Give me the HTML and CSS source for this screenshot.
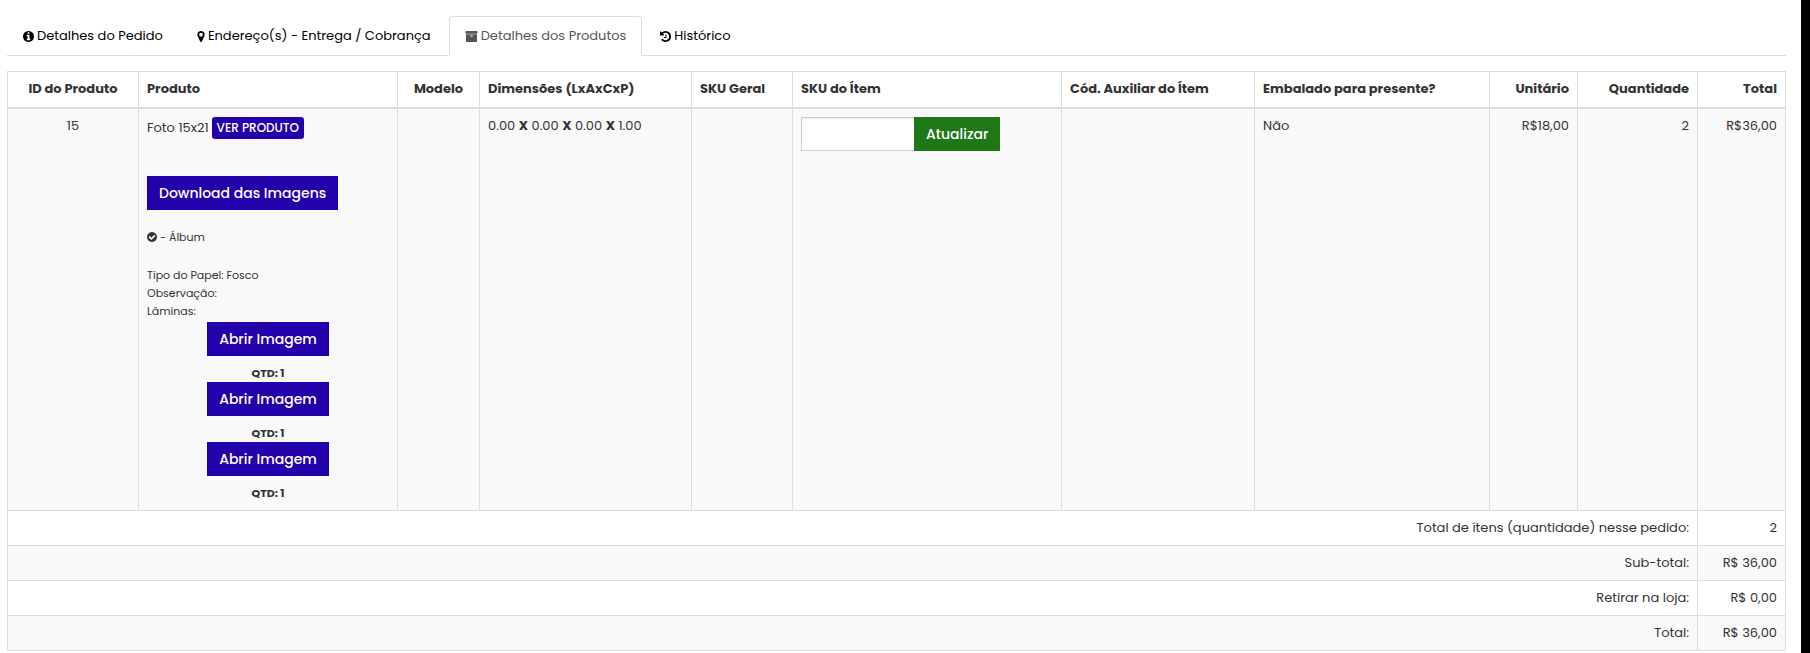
FILE: index.html
```html
<!DOCTYPE html>
<html lang="pt-BR">
<head>
    <meta charset="UTF-8">
    <meta name="viewport" content="width=device-width, initial-scale=1.0">
    <title>Detalhes do Pedido</title>
    <link rel="stylesheet" href="styles.css">
</head>
<body>
    <main class="content">
        <!-- Tabs -->
        <ul class="nav-tabs">
            <li>
                <a href="#pedido">
                    <svg class="icon" viewBox="128 128 1536 1536" aria-hidden="true"><path d="M1152 1376v-160q0-14-9-23t-23-9h-96v-512q0-14-9-23t-23-9h-320q-14 0-23 9t-9 23v160q0 14 9 23t23 9h96v320h-96q-14 0-23 9t-9 23v160q0 14 9 23t23 9h448q14 0 23-9t9-23zm-128-896v-160q0-14-9-23t-23-9h-192q-14 0-23 9t-9 23v160q0 14 9 23t23 9h192q14 0 23-9t9-23zm640 416q0 209-103 385.5t-279.5 279.5-385.5 103-385.5-103-279.5-279.5-103-385.5 103-385.5 279.5-279.5 385.5-103 385.5 103 279.5 279.5 103 385.5z"/></svg>
                    <span>Detalhes do Pedido</span>
                </a>
            </li>
            <li>
                <a href="#enderecos">
                    <svg class="icon icon-marker" viewBox="384 128 1024 1536" aria-hidden="true"><path d="M1152 640q0-106-75-181t-181-75-181 75-75 181 75 181 181 75 181-75 75-181zm256 0q0 109-33 179l-364 774q-16 33-47.500 52t-67.500 19-67.500-19-46.500-52l-365-774q-33-70-33-179 0-212 150-362t362-150 362 150 150 362z"/></svg>
                    <span>Endereço(s) - Entrega / Cobrança</span>
                </a>
            </li>
            <li class="active">
                <a href="#produtos">
                    <svg class="icon icon-archive" viewBox="0 128 1792 1536" aria-hidden="true"><path d="M1088 832q0-26-19-45t-45-19h-256q-26 0-45 19t-19 45 19 45 45 19h256q26 0 45-19t19-45zm576-192v960q0 26-19 45t-45 19h-1408q-26 0-45-19t-19-45v-960q0-26 19-45t45-19h1408q26 0 45 19t19 45zm64-448v256q0 26-19 45t-45 19h-1536q-26 0-45-19t-19-45v-256q0-26 19-45t45-19h1536q26 0 45 19t19 45z"/></svg>
                    <span>Detalhes dos Produtos</span>
                </a>
            </li>
            <li>
                <a href="#historico">
                    <svg class="icon" viewBox="128 128 1536 1536" aria-hidden="true"><path d="M1664 896q0 156-61 298t-164 245-245 164-298 61q-172 0-327-72.500t-264-204.500q-7-10-6.500-22.500t8.500-20.500l137-138q10-9 25-9 16 2 23 12 73 95 179 147t225 52q104 0 198.500-40.500t163.500-109.500 109.500-163.500 40.500-198.500-40.500-198.500-109.500-163.500-163.500-109.500-198.500-40.500q-98 0-188 35.500t-160 101.500l137 138q31 30 14 69-17 40-59 40h-448q-26 0-45-19t-19-45v-448q0-42 40-59 39-17 69 14l130 129q107-101 244.500-156.500t284.500-55.500q156 0 298 61t245 164 164 245 61 298zm-640-288v448q0 14-9 23t-23 9h-320q-14 0-23-9t-9-23v-64q0-14 9-23t23-9h224v-352q0-14 9-23t23-9h64q14 0 23 9t9 23z"/></svg>
                    <span>Histórico</span>
                </a>
            </li>
        </ul>

        <!-- Products -->
        <table class="table" id="produtos">
            <colgroup>
                <col class="col-id">
                <col class="col-product">
                <col class="col-model">
                <col class="col-size">
                <col class="col-sku">
                <col class="col-item">
                <col class="col-aux">
                <col class="col-gift">
                <col class="col-price">
                <col class="col-qty">
                <col class="col-total">
            </colgroup>
            <thead>
                <tr>
                    <th class="text-center">ID do Produto</th>
                    <th>Produto</th>
                    <th class="text-center">Modelo</th>
                    <th>Dimensões (LxAxCxP)</th>
                    <th>SKU Geral</th>
                    <th>SKU do Ítem</th>
                    <th>Cód. Auxiliar do Ítem</th>
                    <th>Embalado para presente?</th>
                    <th class="text-right">Unitário</th>
                    <th class="text-right">Quantidade</th>
                    <th class="text-right">Total</th>
                </tr>
            </thead>
            <tbody>
                <tr>
                    <td class="text-center">15</td>
                    <td>
                        <div class="product-name">
                            <span>Foto 15x21</span>
                            <a class="label" href="#produto">VER PRODUTO</a>
                        </div>
                        <button type="button" class="btn btn-primary">Download das Imagens</button>
                        <div class="product-option">
                            <svg class="icon icon-check" viewBox="128 128 1536 1536" aria-hidden="true"><path d="M1412 734q0-28-18-46l-91-90q-19-19-45-19t-45 19l-408 407-226-226q-19-19-45-19t-45 19l-91 90q-18 18-18 46 0 27 18 45l362 362q19 19 45 19 27 0 46-19l543-543q18-18 18-45zm252 162q0 209-103 385.500t-279.500 279.500-385.500 103-385.500-103-279.500-279.500-103-385.500 103-385.500 279.500-279.500 385.500-103 385.500 103 279.500 279.500 103 385.500z"/></svg>
                            <span>- Álbum</span>
                        </div>
                        <div class="product-info">
                            <div>Tipo do Papel: Fosco</div>
                            <div>Observação:</div>
                            <div>Lâminas:</div>
                        </div>
                        <ul class="sheets">
                            <li><button type="button" class="btn btn-primary">Abrir Imagem</button><b>QTD: 1</b></li>
                            <li><button type="button" class="btn btn-primary">Abrir Imagem</button><b>QTD: 1</b></li>
                            <li><button type="button" class="btn btn-primary">Abrir Imagem</button><b>QTD: 1</b></li>
                        </ul>
                    </td>
                    <td></td>
                    <td>0.00 <b>X</b> 0.00 <b>X</b> 0.00 <b>X</b> 1.00</td>
                    <td></td>
                    <td>
                        <form class="sku-form">
                            <input type="text" name="sku" aria-label="SKU do Ítem">
                            <button type="button" class="btn btn-success">Atualizar</button>
                        </form>
                    </td>
                    <td></td>
                    <td>Não</td>
                    <td class="text-right">R$18,00</td>
                    <td class="text-right">2</td>
                    <td class="text-right">R$36,00</td>
                </tr>
                <tr>
                    <td class="text-right" colspan="10">Total de ítens (quantidade) nesse pedido:</td>
                    <td class="text-right">2</td>
                </tr>
                <tr>
                    <td class="text-right" colspan="10">Sub-total:</td>
                    <td class="text-right">R$ 36,00</td>
                </tr>
                <tr>
                    <td class="text-right" colspan="10">Retirar na loja:</td>
                    <td class="text-right">R$ 0,00</td>
                </tr>
                <tr>
                    <td class="text-right" colspan="10">Total:</td>
                    <td class="text-right">R$ 36,00</td>
                </tr>
            </tbody>
        </table>
    </main>
</body>
</html>
```
FILE: styles.css
```css
* {
    box-sizing: border-box;
}

body {
    margin: 0;
    min-height: 100vh;
    border-right: 9px solid #000;
    background-color: #fff;
    color: #333;
    font-family: Poppins, Inter, "Open Sans", sans-serif;
    font-size: 13px;
    line-height: 18px;
}

.content {
    padding: 16px 15px 0 7px;
}

.icon {
    width: 11px;
    height: 11px;
    fill: currentColor;
}

.icon-marker {
    width: 8px;
}

.icon-archive {
    width: 13px;
}

.icon-check {
    width: 10px;
    height: 10px;
}

/* Tabs */
.nav-tabs {
    display: flex;
    gap: 2px;
    margin: 0 0 15px;
    padding: 0;
    list-style: none;
    border-bottom: 1px solid #ddd;
}

.nav-tabs li {
    margin-bottom: -1px;
}

.nav-tabs a {
    display: flex;
    align-items: center;
    gap: 3px;
    padding: 10px 15px;
    border: 1px solid transparent;
    border-radius: 4px 4px 0 0;
    color: #000;
    text-decoration: none;
}

.nav-tabs .active a {
    color: #555;
    background-color: #fff;
    border-color: #ddd #ddd #fff;
}

/* Table */
.table {
    width: 100%;
    table-layout: fixed;
    border-collapse: collapse;
}

.table th,
.table td {
    padding: 8px;
    border: 1px solid #ddd;
    text-align: left;
    vertical-align: top;
}

.table th {
    padding-bottom: 9px;
    border-bottom-width: 2px;
    white-space: nowrap;
}

.table tbody tr:nth-child(odd) {
    background-color: #f9f9f9;
}

.table tbody tr:nth-child(even) {
    background-color: #fff;
}

.table .text-center {
    text-align: center;
}

.table .text-right {
    text-align: right;
}

.col-id { width: 131px; }
.col-product { width: 259px; }
.col-model { width: 82px; }
.col-size { width: 212px; }
.col-sku { width: 101px; }
.col-item { width: 269px; }
.col-aux { width: 193px; }
.col-gift { width: 235px; }
.col-price { width: 88px; }
.col-qty { width: 120px; }
.col-total { width: 88px; }

/* Buttons */
.btn {
    height: 34px;
    padding: 0 12px;
    border: 0;
    color: #fff;
    font-family: inherit;
    font-size: 14px;
    font-weight: 500;
    cursor: pointer;
}

.btn-primary {
    background-color: #2200aa;
}

.btn-success {
    background-color: #1e7816;
}

/* Product cell */
.product-name {
    display: flex;
    align-items: center;
    gap: 3px;
    margin-bottom: 37px;
}

.label {
    padding: 0 5px;
    border-radius: 3px;
    background-color: #2200aa;
    color: #fff;
    font-size: 12px;
    font-weight: 500;
    line-height: 22px;
    text-decoration: none;
}

.product-option {
    display: flex;
    align-items: center;
    gap: 3px;
    margin: 18px 0 20px;
    font-size: 11px;
}

.product-info {
    margin-bottom: 2px;
    font-size: 11px;
}

.sheets {
    display: flex;
    flex-direction: column;
    margin: 0;
    padding: 0;
    list-style: none;
}

.sheets li {
    display: flex;
    flex-direction: column;
    align-items: center;
    gap: 8px;
    font-size: 11px;
}

.sku-form {
    display: flex;
}

.sku-form input {
    width: 113px;
    height: 34px;
    padding: 6px 12px;
    border: 1px solid #ccc;
    border-right: 0;
    background-color: #fff;
    box-shadow: inset 0 1px 1px rgba(0, 0, 0, 0.08);
    font: inherit;
}
```
